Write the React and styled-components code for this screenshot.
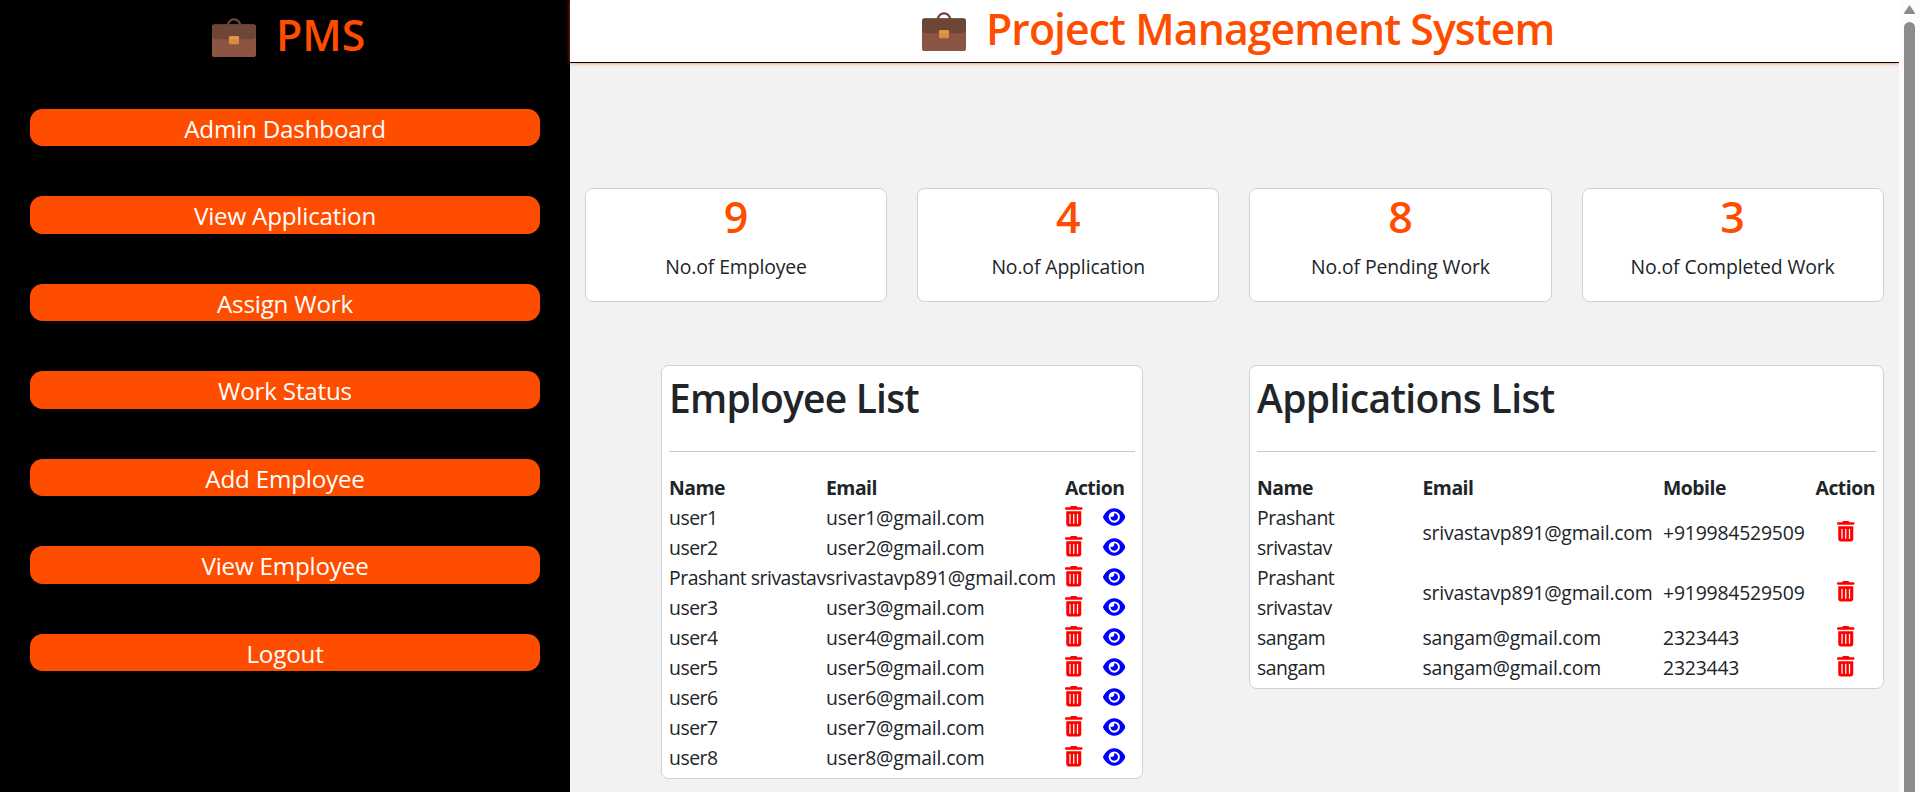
import React from "react";
import styled, { createGlobalStyle } from "styled-components";
import { FaTrashCan, FaEye } from "react-icons/fa6";

const ORANGE = "#ff4d00";

const GlobalStyle = createGlobalStyle`
  * { box-sizing: border-box; }
  html, body { margin: 0; height: 100%; overflow: hidden; }
  body {
    font-family: "Open Sans", "Noto Sans", sans-serif;
    font-size: 19.4px;
    line-height: 30px;
    letter-spacing: -0.2px;
    color: #212529;
    background: #f2f2f2;
  }
`;

const Page = styled.div`
  display: flex;
  height: 792px;
  width: 1920px;
  overflow: hidden;
`;

const Sidebar = styled.aside`
  width: 570px;
  flex: none;
  background: #000;
`;

const Brand = styled.div`
  display: flex;
  justify-content: flex-start;
  align-items: flex-start;
  padding: ${(p) => p.$padding};
  gap: 20px;
  color: ${ORANGE};
  font-size: 42.8px;
  font-weight: 600;
  line-height: 50px;
  letter-spacing: ${(p) => p.$spacing};
  white-space: nowrap;
`;

const BrandText = styled.span`
  margin-top: ${(p) => p.$shift};
`;

const Nav = styled.nav`
  display: flex;
  flex-direction: column;
  gap: 50px;
  padding: 0 30px;
  margin-top: 48.75px;
`;

const NavItem = styled.a`
  height: 37.5px;
  border-radius: 12.5px;
  background: ${ORANGE};
  color: #fff;
  font-size: 24.2px;
  line-height: 39px;
  letter-spacing: -0.2px;
  text-align: center;
`;

const Main = styled.main`
  width: 1329px;
  flex: none;
`;

const Header = styled.header`
  position: relative;
  height: 63px;
  background: #fff;
  border-bottom: 1px solid #000;
  box-shadow: 0 0 4px rgba(255, 77, 0, 0.75);
`;

const Stats = styled.section`
  display: grid;
  grid-template-columns: repeat(4, 1fr);
  gap: 30px;
  padding: 0 15.3px 0 15px;
  margin-top: 125px;
`;

const Card = styled.div`
  background: #fff;
  border: 1px solid #d0d0d0;
  border-radius: 7.5px;
`;

const StatCard = styled(Card)`
  height: 114px;
  padding-top: 3px;
  text-align: center;
`;

const StatValue = styled.div`
  color: ${ORANGE};
  font-size: 43px;
  font-weight: 600;
  line-height: 50px;
  letter-spacing: 0;
`;

const StatLabel = styled.div`
  margin-top: 10px;
  letter-spacing: -0.12px;
`;

const Lists = styled.section`
  display: flex;
  align-items: flex-start;
  gap: 106px;
  margin: 63px 15px 0 91px;
`;

const ListCard = styled(Card)`
  width: ${(p) => p.$width};
  padding: 8px 7px 5px;
`;

const ListTitle = styled.h2`
  margin: 0 0 29px;
  font-size: 39px;
  font-weight: 600;
  line-height: 48px;
  letter-spacing: ${(p) => p.$spacing};
`;

const Rule = styled.hr`
  height: 1px;
  border: 0;
  margin: 0 0 21px;
  background: #c7c8c9;
`;

const Row = styled.div`
  display: grid;
  grid-template-columns: ${(p) => p.$columns};
  align-items: center;
  font-weight: ${(p) => (p.$head ? 700 : 400)};
  letter-spacing: ${(p) => (p.$head ? "-0.5px" : "inherit")};
`;

const Cell = styled.div`
  white-space: nowrap;
`;

const NameCell = styled(Cell)`
  letter-spacing: -0.48px;
  white-space: ${(p) => (p.$wrap ? "normal" : "nowrap")};
  width: 110px;
`;

const Actions = styled.div`
  display: flex;
  align-items: center;
  justify-content: ${(p) => (p.$center ? "center" : "flex-start")};
  gap: 20px;
  height: 30px;
  padding-bottom: 3px;
`;

const TrashIcon = styled(FaTrashCan)`
  width: 17.5px;
  height: 20.5px;
  color: #f00;
`;

const EyeIcon = styled(FaEye)`
  width: 22.5px;
  height: 20px;
  color: #00f;
`;

const Scrollbar = styled.div`
  position: relative;
  z-index: 1;
  width: 21px;
  flex: none;
  background: #fcfcfc;
  display: flex;
  flex-direction: column;
  align-items: center;
  padding-top: 5px;
`;

const ScrollArrow = styled.svg`
  display: block;
  width: 11px;
  height: 9px;
  fill: #8b8b8b;
`;

const ScrollThumb = styled.div`
  flex: 1;
  width: 11px;
  margin-top: 8px;
  border-radius: 5.5px 5.5px 0 0;
  background: #8b8b8b;
`;

const BriefcaseSvg = styled.svg`
  display: block;
  flex: none;
  width: 44px;
  height: 40px;
`;

function Briefcase() {
  return (
    <BriefcaseSvg viewBox="0 0 44 40">
      <path d="M15.8 8.5V7.6a6.2 6.2 0 0 1 12.4 0v.9" fill="none" stroke="#6d4636" strokeWidth="2.2" />
      <rect x="0" y="6.5" width="44" height="32.5" rx="2.6" fill="#8c5543" />
      <path d="M0 9a2.7 2.7 0 0 1 2.7-2.7h38.6A2.7 2.7 0 0 1 44 9v8.3a4 4 0 0 1-4 4H4a4 4 0 0 1-4-4z" fill="#6d4636" />
      <rect x="17" y="18.3" width="10" height="8" rx="1.2" fill="#d98c3c" />
      <rect x="17" y="18.3" width="10" height="3" rx="1.2" fill="#e39a48" />
    </BriefcaseSvg>
  );
}

const menu = [
  "Admin Dashboard",
  "View Application",
  "Assign Work",
  "Work Status",
  "Add Employee",
  "View Employee",
  "Logout",
];

const stats = [
  ["9", "No.of Employee"],
  ["4", "No.of Application"],
  ["8", "No.of Pending Work"],
  ["3", "No.of Completed Work"],
];

const employees = [
  ["user1", "user1@gmail.com"],
  ["user2", "user2@gmail.com"],
  ["Prashant srivastav", "srivastavp891@gmail.com"],
  ["user3", "user3@gmail.com"],
  ["user4", "user4@gmail.com"],
  ["user5", "user5@gmail.com"],
  ["user6", "user6@gmail.com"],
  ["user7", "user7@gmail.com"],
  ["user8", "user8@gmail.com"],
];

const applications = [
  ["Prashant srivastav", "srivastavp891@gmail.com", "+919984529509"],
  ["Prashant srivastav", "srivastavp891@gmail.com", "+919984529509"],
  ["sangam", "sangam@gmail.com", "2323443"],
  ["sangam", "sangam@gmail.com", "2323443"],
];

const employeeColumns = "157px 239px 1fr";
const applicationColumns = "165.5px 240.5px 152.5px 1fr";

export default function App() {
  return (
    <Page>
      <GlobalStyle />
      <Sidebar>
        <Brand $padding="18px 0 0 212px" $spacing="0">
          <Briefcase />
          <BrandText $shift="-8px">PMS</BrandText>
        </Brand>
        <Nav>
          {menu.map((label) => (
            <NavItem key={label}>{label}</NavItem>
          ))}
        </Nav>
      </Sidebar>
      <Main>
        <Header>
          <Brand $padding="12px 0 0 352px" $spacing="-0.94px">
            <Briefcase />
            <BrandText $shift="-8.5px">Project Management System</BrandText>
          </Brand>
        </Header>
        <Stats>
          {stats.map(([value, label]) => (
            <StatCard key={label}>
              <StatValue>{value}</StatValue>
              <StatLabel>{label}</StatLabel>
            </StatCard>
          ))}
        </Stats>
        <Lists>
          <ListCard $width="482px">
            <ListTitle $spacing="-0.8px">Employee List</ListTitle>
            <Rule />
            <Row $head $columns={employeeColumns}>
              <Cell>Name</Cell>
              <Cell>Email</Cell>
              <Cell>Action</Cell>
            </Row>
            {employees.map(([name, email]) => (
              <Row key={name} $columns={employeeColumns}>
                <NameCell>{name}</NameCell>
                <Cell>{email}</Cell>
                <Actions>
                  <TrashIcon preserveAspectRatio="none" />
                  <EyeIcon />
                </Actions>
              </Row>
            ))}
          </ListCard>
          <ListCard $width="635px">
            <ListTitle $spacing="-0.65px">Applications List</ListTitle>
            <Rule />
            <Row $head $columns={applicationColumns}>
              <Cell>Name</Cell>
              <Cell>Email</Cell>
              <Cell>Mobile</Cell>
              <Cell>Action</Cell>
            </Row>
            {applications.map(([name, email, mobile], i) => (
              <Row key={i} $columns={applicationColumns}>
                <NameCell $wrap>{name}</NameCell>
                <Cell>{email}</Cell>
                <Cell>{mobile}</Cell>
                <Actions $center>
                  <TrashIcon preserveAspectRatio="none" />
                </Actions>
              </Row>
            ))}
          </ListCard>
        </Lists>
      </Main>
      <Scrollbar>
        <ScrollArrow viewBox="0 0 11 9">
          <path d="M5.5 0 11 8q0 1-1 1H1Q0 9 0 8z" />
        </ScrollArrow>
        <ScrollThumb />
      </Scrollbar>
    </Page>
  );
}
